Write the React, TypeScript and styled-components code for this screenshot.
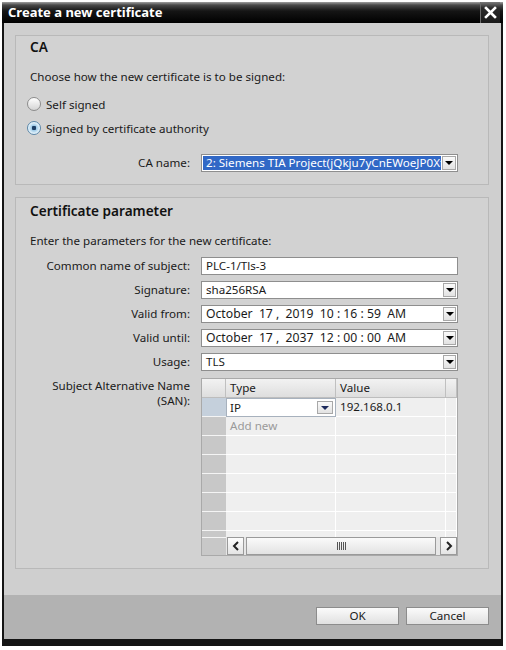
import React from 'react';
import styled, { createGlobalStyle } from 'styled-components';

const GlobalStyle = createGlobalStyle`
  html, body {
    margin: 0;
    padding: 0;
    background: #ffffff;
  }
  body {
    font-family: "Noto Sans", "Open Sans", sans-serif;
    font-size: 11.6px;
    color: #1a1a1a;
  }
`;

const Page = styled.div`
  width: 506px;
  height: 650px;
  overflow: hidden;
  padding: 2px 0 0 2px;
  box-sizing: border-box;
`;

const Dialog = styled.div`
  width: 501px;
  height: 644px;
  box-sizing: border-box;
  border: 0 solid #141414;
  border-width: 0 2px 7px 2px;
  display: flex;
  flex-direction: column;
  background: #cfcfcf;
`;

const TitleBar = styled.div`
  height: 21px;
  margin: 0 -2px;
  display: flex;
  align-items: center;
  background: linear-gradient(#a0a0a0 0, #4a4a4a 3px, #151515 9px, #000 21px);
`;

const Title = styled.div`
  flex: 1;
  padding-left: 6px;
  color: #fff;
  font-weight: bold;
  font-size: 13px;
  line-height: 21px;
`;

const CloseBtn = styled.div`
  width: 19px;
  height: 21px;
  margin-right: 3px;
  border-left: 1px solid #6a6a6a;
  display: flex;
  align-items: center;
  justify-content: center;
  background: linear-gradient(#7a7a7a 0, #2a2a2a 6px, #1a1a1a);
`;

const Body = styled.div`
  flex: 1;
  padding: 12px 12px 0 11px;
  display: flex;
  flex-direction: column;
  gap: 12px;
`;

const Group = styled.div<{ $pt: number }>`
  border: 1px solid #b9b9b9;
  background: #d2d2d2;
  padding: ${p => p.$pt}px 30px 12px 14px;
  display: flex;
  flex-direction: column;
`;

const Heading = styled.div`
  font-size: 13.6px;
  font-weight: 600;
  line-height: 20px;
  color: #111;
`;

const Hint = styled.div<{ $mt: number }>`
  margin-top: ${p => p.$mt}px;
  line-height: 16px;
`;

const RadioRow = styled.div<{ $mt: number }>`
  margin-top: ${p => p.$mt}px;
  height: 18px;
  display: flex;
  align-items: center;
  gap: 5px;
  margin-left: -3px;
`;

const Radio = styled.span<{ $on?: boolean }>`
  width: 14px;
  height: 14px;
  border-radius: 50%;
  box-sizing: border-box;
  border: 1px solid ${p => (p.$on ? '#5a86a8' : '#8c8c8c')};
  background: ${p =>
    p.$on
      ? 'radial-gradient(circle, #1d3f66 0 2px, #9fcbe8 2.5px, #e3f2fb 5.5px)'
      : 'linear-gradient(#ffffff, #d4d4d4)'};
`;

const FieldRow = styled.div<{ $mt: number }>`
  margin-top: ${p => p.$mt}px;
  display: grid;
  grid-template-columns: 160px 257px;
  column-gap: 11px;
  align-items: start;
`;

const Label = styled.div`
  text-align: right;
  line-height: 18px;
  white-space: nowrap;
`;

const SanLabel = styled(Label)`
  line-height: 15px;
`;

const Box = styled.div`
  height: 18px;
  box-sizing: border-box;
  border: 1px solid #8e8e8e;
  background: #fff;
  display: flex;
  align-items: stretch;
`;

const BoxText = styled.div<{ $sel?: boolean; $wide?: boolean }>`
  flex: 1;
  min-width: 0;
  overflow: hidden;
  white-space: pre;
  line-height: 16px;
  padding-left: 4px;
  font-size: ${p => (p.$wide ? '12.2px' : '11.6px')};
  background: ${p => (p.$sel ? '#3168c6' : 'transparent')};
  box-shadow: ${p => (p.$sel ? 'inset 0 0 0 1px #ffffff' : 'none')};
  color: ${p => (p.$sel ? '#fff' : '#1a1a1a')};
`;

const DropBtn = styled.div<{ $w: number }>`
  width: ${p => p.$w}px;
  margin: 1px 1px 1px 0;
  box-sizing: border-box;
  border: 1px solid #a8a8a8;
  background: linear-gradient(#fafafa, #e2e2e2);
  display: flex;
  align-items: center;
  justify-content: center;
`;

const Arrow = styled.span<{ $c?: string }>`
  width: 0;
  height: 0;
  border-left: 4px solid transparent;
  border-right: 4px solid transparent;
  border-top: 4px solid ${p => p.$c || '#000'};
`;

const Table = styled.div`
  height: 178px;
  border: 1px solid #a9a9a9;
  box-sizing: border-box;
  display: flex;
  flex-direction: column;
  overflow: hidden;
  background: #efefef;
`;

const TRow = styled.div`
  display: grid;
  grid-template-columns: 24px 110px 110px 1fr;
  height: 19px;
  flex: none;
`;

const HeadCell = styled.div`
  box-sizing: border-box;
  border-right: 1px solid #c0c0c0;
  border-bottom: 1px solid #bdbdbd;
  background: linear-gradient(#f2f2f2, #dedede);
  line-height: 18px;
  padding-left: 4px;
`;

const RowHead = styled.div<{ $active?: boolean }>`
  box-sizing: border-box;
  border-bottom: 1px solid #f4f4f4;
  background: ${p => (p.$active ? '#c5d0dc' : '#c8c8c8')};
`;

const Cell = styled.div<{ $muted?: boolean }>`
  box-sizing: border-box;
  border-right: 1px solid #ffffff;
  border-bottom: 1px solid #ffffff;
  line-height: 18px;
  padding-left: 4px;
  color: ${p => (p.$muted ? '#9a9a9a' : '#1a1a1a')};
  white-space: nowrap;
`;

const EditCell = styled.div`
  box-sizing: border-box;
  border: 1px solid #a7b1bd;
  background: #fff;
  display: flex;
  padding: 1px;
`;

const EditText = styled.div`
  flex: 1;
  line-height: 15px;
  padding-left: 2px;
`;

const TBody = styled.div`
  flex: 1;
  overflow: hidden;
  display: flex;
  flex-direction: column;
`;

const ScrollRow = styled.div`
  height: 18px;
  flex: none;
  display: flex;
`;

const ScrollStub = styled.div`
  width: 24px;
  background: #c8c8c8;
  border-top: 1px solid #f4f4f4;
  box-sizing: border-box;
`;

const Scrollbar = styled.div`
  flex: 1;
  display: flex;
  gap: 2px;
  padding-left: 1px;
  background: #e6e6e6;
`;

const ScrollBtn = styled.div`
  width: 17px;
  box-sizing: border-box;
  border: 1px solid #9a9a9a;
  background: linear-gradient(#fdfdfd, #e4e4e4);
  display: flex;
  align-items: center;
  justify-content: center;
`;

const Track = styled.div`
  flex: 1;
  box-sizing: border-box;
  border: 1px solid #9a9a9a;
  margin-right: 2px;
  background: linear-gradient(#fafafa, #e2e2e2);
  display: flex;
  align-items: center;
  justify-content: center;
`;

const Grip = styled.span`
  width: 9px;
  height: 8px;
  background: repeating-linear-gradient(90deg, #555 0 1px, transparent 1px 2px);
`;

const Footer = styled.div`
  height: 44px;
  background: #b2b2b2;
  display: flex;
  justify-content: flex-end;
  align-items: flex-start;
  gap: 7px;
  padding: 12px 12px 0 0;
  box-sizing: border-box;
`;

const Button = styled.div`
  width: 83px;
  height: 18px;
  box-sizing: border-box;
  border: 1px solid #8c8c8c;
  background: linear-gradient(#fbfbfb, #e0e0e0);
  text-align: center;
  line-height: 16px;
  color: #1a1a1a;
`;

const Chevron = ({ dir }: { dir: 'l' | 'r' }) => (
  <svg width="8" height="10" viewBox="0 0 8 10">
    <path
      d={dir === 'l' ? 'M6 1 L2 5 L6 9' : 'M2 1 L6 5 L2 9'}
      fill="none"
      stroke="#222"
      strokeWidth="2"
    />
  </svg>
);

const Select = ({ value, wide }: { value: string; wide?: boolean }) => (
  <Box>
    <BoxText $wide={wide}>{value}</BoxText>
    <DropBtn $w={13}>
      <Arrow />
    </DropBtn>
  </Box>
);

const emptyRows = [0, 1, 2, 3, 4, 5];

const App = () => (
  <>
    <GlobalStyle />
    <Page>
      <Dialog>
        <TitleBar>
          <Title>Create a new certificate</Title>
          <CloseBtn>
            <svg width="13" height="13" viewBox="0 0 13 13">
              <path d="M2 2 L11 11 M11 2 L2 11" stroke="#fff" strokeWidth="2.6" strokeLinecap="square" />
            </svg>
          </CloseBtn>
        </TitleBar>
        <Body>
          <Group $pt={1}>
            <Heading>CA</Heading>
            <Hint $mt={12}>Choose how the new certificate is to be signed:</Hint>
            <RadioRow $mt={10}>
              <Radio />
              <span>Self signed</span>
            </RadioRow>
            <RadioRow $mt={6}>
              <Radio $on />
              <span>Signed by certificate authority</span>
            </RadioRow>
            <FieldRow $mt={17}>
              <Label>CA name:</Label>
              <Box>
                <BoxText $sel>2: Siemens TIA Project(jQkju7yCnEWoeJP0Xt</BoxText>
                <DropBtn $w={14}>
                  <Arrow />
                </DropBtn>
              </Box>
            </FieldRow>
          </Group>
          <Group $pt={3}>
            <Heading>Certificate parameter</Heading>
            <Hint $mt={12}>Enter the parameters for the new certificate:</Hint>
            <FieldRow $mt={8}>
              <Label>Common name of subject:</Label>
              <Box>
                <BoxText>PLC-1/Tls-3</BoxText>
              </Box>
            </FieldRow>
            <FieldRow $mt={6}>
              <Label>Signature:</Label>
              <Select value="sha256RSA" />
            </FieldRow>
            <FieldRow $mt={6}>
              <Label>Valid from:</Label>
              <Select value="October  17 ,  2019  10 : 16 : 59  AM" wide />
            </FieldRow>
            <FieldRow $mt={6}>
              <Label>Valid until:</Label>
              <Select value="October  17 ,  2037  12 : 00 : 00  AM" wide />
            </FieldRow>
            <FieldRow $mt={6}>
              <Label>Usage:</Label>
              <Select value="TLS" />
            </FieldRow>
            <FieldRow $mt={7}>
              <SanLabel>
                Subject Alternative Name
                <br />
                (SAN):
              </SanLabel>
              <Table>
                <TRow>
                  <HeadCell />
                  <HeadCell>Type</HeadCell>
                  <HeadCell>Value</HeadCell>
                  <HeadCell />
                </TRow>
                <TBody>
                  <TRow>
                    <RowHead $active />
                    <EditCell>
                      <EditText>IP</EditText>
                      <DropBtn $w={16}>
                        <Arrow $c="#1c2a5c" />
                      </DropBtn>
                    </EditCell>
                    <Cell>192.168.0.1</Cell>
                    <Cell />
                  </TRow>
                  <TRow>
                    <RowHead />
                    <Cell $muted>Add new</Cell>
                    <Cell />
                    <Cell />
                  </TRow>
                  {emptyRows.map(i => (
                    <TRow key={i}>
                      <RowHead />
                      <Cell />
                      <Cell />
                      <Cell />
                    </TRow>
                  ))}
                </TBody>
                <ScrollRow>
                  <ScrollStub />
                  <Scrollbar>
                    <ScrollBtn>
                      <Chevron dir="l" />
                    </ScrollBtn>
                    <Track>
                      <Grip />
                    </Track>
                    <ScrollBtn>
                      <Chevron dir="r" />
                    </ScrollBtn>
                  </Scrollbar>
                </ScrollRow>
              </Table>
            </FieldRow>
          </Group>
        </Body>
        <Footer>
          <Button>OK</Button>
          <Button>Cancel</Button>
        </Footer>
      </Dialog>
    </Page>
  </>
);

export default App;
